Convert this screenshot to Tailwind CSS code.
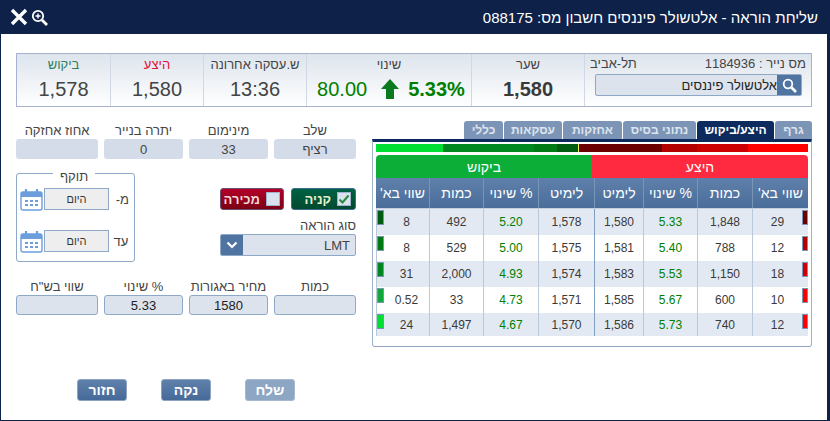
<!DOCTYPE html>
<html lang="he" dir="rtl">
<head>
<meta charset="utf-8">
<title>שליחת הוראה</title>
<script src="https://cdn.jsdelivr.net/npm/@tailwindcss/browser@4"></script>
</head>
<body class="m-0 bg-white">
<div class="w-[830px] h-[421px] overflow-hidden flex flex-col bg-white border-l border-b border-r-[3px] border-[#0d2149] font-['Liberation_Sans',Arial,sans-serif] text-[#444] text-[13px] leading-none">
  <!-- title bar -->
  <header class="h-[34px] shrink-0 bg-[#0d2149] text-white flex items-center justify-between pr-[9px] pl-[9px]">
    <h1 class="text-[15px] font-normal">שליחת הוראה - אלטשולר פיננסים חשבון מס: 088175</h1>
    <div class="flex flex-row-reverse items-center gap-[3px]">
      <svg width="18" height="18" viewBox="0 0 18 18" fill="none" stroke="white" stroke-width="3.4"><path d="M2 2 16 16M16 2 2 16"/></svg>
      <svg width="17" height="17" viewBox="0 0 17 17" fill="none" stroke="white"><circle cx="7" cy="7" r="5.2" stroke-width="1.8"/><path d="M11 11 16 16" stroke-width="2.8"/><path d="M4.5 7h5M7 4.5v5" stroke-width="1.4"/></svg>
    </div>
  </header>

  <div class="flex-1 flex flex-col pt-[19px] pr-[15px] pl-[15px]">
    <!-- quote strip -->
    <section class="h-[54px] w-[796px] shrink-0 flex border border-[#a6b2cf] bg-linear-to-b from-[#dde4ec] to-white">
      <div class="w-[227px] shrink-0 border-l border-[#cfd8e4] px-[5px] pt-px flex flex-col">
        <div class="flex justify-between text-[13px] h-[16px] items-center"><span>מס נייר : 1184936</span><span>תל-אביב</span></div>
        <div class="mt-[3px] mr-[4px] h-[22px] w-[207px] flex rounded-[2px] border border-[#8ea8c8] bg-[#dce3ed] overflow-hidden">
          <span class="w-[24px] shrink-0 bg-[#4f74a2] flex items-center justify-center">
            <svg width="15" height="15" viewBox="0 0 15 15" fill="none" stroke="white"><circle cx="6" cy="6" r="4.3" stroke-width="1.8"/><path d="M9.5 9.5 14 14" stroke-width="2.6"/></svg>
          </span>
          <span class="text-[13px] text-[#222] self-center">אלטשולר פיננסים</span>
        </div>
      </div>
      <div class="w-[113px] shrink-0 border-l border-[#cfd8e4] flex flex-col items-center pt-[4px]">
        <span>שער</span><strong class="text-[20px] mt-[8px] text-[#3a3a3a]">1,580</strong>
      </div>
      <div class="w-[165px] shrink-0 border-l border-[#cfd8e4] flex flex-col items-center pt-[4px]">
        <span>שינוי</span>
        <div class="flex items-center justify-center mt-[8px] h-[20px] gap-[9px] pl-[4px]">
          <strong class="text-[20px] text-[#008000]">5.33%</strong>
          <svg width="18" height="20" viewBox="0 0 18 20" fill="#0a7a1e"><path d="M9 0 18 10H13V20H5V10H0Z"/></svg>
          <span class="text-[20px] text-[#008000] mr-[5px]">80.00</span>
        </div>
      </div>
      <div class="w-[103px] shrink-0 border-l border-[#cfd8e4] flex flex-col items-center pt-[4px]">
        <span>ש.עסקה אחרונה</span><span class="text-[20px] mt-[8px] text-[#444]">13:36</span>
      </div>
      <div class="w-[93px] shrink-0 border-l border-[#cfd8e4] flex flex-col items-center pt-[4px]">
        <span class="text-[#e0103a]">היצע</span><span class="text-[20px] mt-[8px] text-[#444]">1,580</span>
      </div>
      <div class="flex-1 flex flex-col items-center pt-[4px]">
        <span class="text-[#2f8060]">ביקוש</span><span class="text-[20px] mt-[8px] text-[#444]">1,578</span>
      </div>
    </section>

    <div class="flex gap-[16px] mt-[14px]">
      <!-- market depth -->
      <section class="w-[440px] shrink-0">
        <nav class="flex gap-px h-[18px] text-[12px] font-bold text-[#dde4ee]">
          <span class="w-[37px] bg-[#7c95b6] rounded-t-[3px] flex items-center justify-center">גרף</span>
          <span class="w-[77px] bg-[#0c2a5e] text-white rounded-t-[3px] flex items-center justify-center">היצע/ביקוש</span>
          <span class="w-[73px] bg-[#7c95b6] rounded-t-[3px] flex items-center justify-center">נתוני בסיס</span>
          <span class="w-[59px] bg-[#7c95b6] rounded-t-[3px] flex items-center justify-center">אחזקות</span>
          <span class="w-[58px] bg-[#7c95b6] rounded-t-[3px] flex items-center justify-center">עסקאות</span>
          <span class="w-[39px] bg-[#7c95b6] rounded-t-[3px] flex items-center justify-center">כללי</span>
        </nav>
        <div class="h-[208px] border-t-[3px] border-[#0c2a5e] border-x border-b border-x-[#9db0c9] border-b-[#8ea3c0] rounded-b-[3px] pt-[2px] px-[3px]">
          <!-- depth bar -->
          <div class="flex h-[8px] w-[432px]">
            <i class="w-[60px] bg-[#ff0000]"></i><i class="w-[51px] bg-[#cc0000]"></i><i class="w-[35px] bg-[#b30000]"></i><i class="w-[84px] bg-[#6b0000]"></i><i class="w-px bg-[#f5ee50]"></i><i class="w-[21px] bg-[#005c10]"></i><i class="w-[23px] bg-[#007a15]"></i><i class="w-[91px] bg-[#008820]"></i><i class="w-[67px] bg-[#00dd33]"></i>
          </div>
          <!-- side headers -->
          <div class="flex h-[23px] w-[432px] mt-[3px] text-white text-[14px]">
            <div class="w-[216px] bg-[#ff2a40] rounded-tr-[4px] flex items-center justify-center">היצע</div>
            <div class="w-[216px] bg-[#0dae38] rounded-tl-[4px] flex items-center justify-center">ביקוש</div>
          </div>
          <!-- table -->
          <div class="w-[432px] text-center text-[12px] text-[#3a3a3a]">
            <div class="grid grid-cols-[56px_55px_54px_49px_56px_55px_54px_53px] h-[31px] bg-linear-to-b from-[#5f80aa] to-[#4a6d9b] text-white text-[14px] items-stretch border-b border-[#c4d0de]">
              <span class="flex items-center justify-center border-l border-[#7894b6]">שווי בא'</span>
              <span class="flex items-center justify-center border-l border-[#7894b6]">כמות</span>
              <span class="flex items-center justify-center border-l border-[#7894b6]">% שינוי</span>
              <span class="flex items-center justify-center border-l border-[#7894b6]">לימיט</span>
              <span class="flex items-center justify-center border-l border-[#7894b6]">לימיט</span>
              <span class="flex items-center justify-center border-l border-[#7894b6]">% שינוי</span>
              <span class="flex items-center justify-center border-l border-[#7894b6]">כמות</span>
              <span class="flex items-center justify-center">שווי בא'</span>
            </div>

            <div class="grid grid-cols-[56px_55px_54px_49px_56px_55px_54px_53px] h-[26px] bg-[#e3e9f3]">
              <div class="flex flex-row-reverse border-l border-[#b9c9d9]"><span class="flex-1 self-center">29</span><i class="w-[6px] h-[15px] mt-px bg-[#6b0000] border border-[#7b93b5]"></i></div>
              <span class="flex items-center justify-center border-l border-[#b9c9d9]">1,848</span>
              <span class="flex items-center justify-center border-l border-[#b9c9d9] text-[#008000]">5.33</span>
              <span class="flex items-center justify-center border-l border-[#7f9fc0]">1,580</span>
              <span class="flex items-center justify-center border-l border-[#b9c9d9]">1,578</span>
              <span class="flex items-center justify-center border-l border-[#b9c9d9] text-[#008000]">5.20</span>
              <span class="flex items-center justify-center border-l border-[#b9c9d9]">492</span>
              <div class="flex flex-row-reverse border-l border-[#b9c9d9]"><i class="w-[7px] h-[15px] mt-px bg-[#005c10] border border-[#7b93b5]"></i><span class="flex-1 self-center">8</span></div>
            </div>

            <div class="grid grid-cols-[56px_55px_54px_49px_56px_55px_54px_53px] h-[26px] bg-white">
              <div class="flex flex-row-reverse border-l border-[#b9c9d9]"><span class="flex-1 self-center">12</span><i class="w-[6px] h-[15px] mt-px bg-[#b30000] border border-[#7b93b5]"></i></div>
              <span class="flex items-center justify-center border-l border-[#b9c9d9]">788</span>
              <span class="flex items-center justify-center border-l border-[#b9c9d9] text-[#008000]">5.40</span>
              <span class="flex items-center justify-center border-l border-[#7f9fc0]">1,581</span>
              <span class="flex items-center justify-center border-l border-[#b9c9d9]">1,575</span>
              <span class="flex items-center justify-center border-l border-[#b9c9d9] text-[#008000]">5.00</span>
              <span class="flex items-center justify-center border-l border-[#b9c9d9]">529</span>
              <div class="flex flex-row-reverse border-l border-[#b9c9d9]"><i class="w-[7px] h-[15px] mt-px bg-[#007a15] border border-[#7b93b5]"></i><span class="flex-1 self-center">8</span></div>
            </div>

            <div class="grid grid-cols-[56px_55px_54px_49px_56px_55px_54px_53px] h-[26px] bg-[#e3e9f3]">
              <div class="flex flex-row-reverse border-l border-[#b9c9d9]"><span class="flex-1 self-center">18</span><i class="w-[6px] h-[15px] mt-px bg-[#cc0000] border border-[#7b93b5]"></i></div>
              <span class="flex items-center justify-center border-l border-[#b9c9d9]">1,150</span>
              <span class="flex items-center justify-center border-l border-[#b9c9d9] text-[#008000]">5.53</span>
              <span class="flex items-center justify-center border-l border-[#7f9fc0]">1,583</span>
              <span class="flex items-center justify-center border-l border-[#b9c9d9]">1,574</span>
              <span class="flex items-center justify-center border-l border-[#b9c9d9] text-[#008000]">4.93</span>
              <span class="flex items-center justify-center border-l border-[#b9c9d9]">2,000</span>
              <div class="flex flex-row-reverse border-l border-[#b9c9d9]"><i class="w-[7px] h-[15px] mt-px bg-[#008820] border border-[#7b93b5]"></i><span class="flex-1 self-center">31</span></div>
            </div>

            <div class="grid grid-cols-[56px_55px_54px_49px_56px_55px_54px_53px] h-[26px] bg-white">
              <div class="flex flex-row-reverse border-l border-[#b9c9d9]"><span class="flex-1 self-center">10</span><i class="w-[6px] h-[15px] mt-px bg-[#ff0000] border border-[#7b93b5]"></i></div>
              <span class="flex items-center justify-center border-l border-[#b9c9d9]">600</span>
              <span class="flex items-center justify-center border-l border-[#b9c9d9] text-[#008000]">5.67</span>
              <span class="flex items-center justify-center border-l border-[#7f9fc0]">1,585</span>
              <span class="flex items-center justify-center border-l border-[#b9c9d9]">1,571</span>
              <span class="flex items-center justify-center border-l border-[#b9c9d9] text-[#008000]">4.73</span>
              <span class="flex items-center justify-center border-l border-[#b9c9d9]">33</span>
              <div class="flex flex-row-reverse border-l border-[#b9c9d9]"><i class="w-[7px] h-[15px] mt-px bg-[#10a838] border border-[#7b93b5]"></i><span class="flex-1 self-center">0.52</span></div>
            </div>

            <div class="grid grid-cols-[56px_55px_54px_49px_56px_55px_54px_53px] h-[23px] bg-[#e3e9f3]">
              <div class="flex flex-row-reverse border-l border-[#b9c9d9]"><span class="flex-1 self-center">12</span><i class="w-[6px] h-[15px] mt-px bg-[#ff0000] border border-[#7b93b5]"></i></div>
              <span class="flex items-center justify-center border-l border-[#b9c9d9]">740</span>
              <span class="flex items-center justify-center border-l border-[#b9c9d9] text-[#008000]">5.73</span>
              <span class="flex items-center justify-center border-l border-[#7f9fc0]">1,586</span>
              <span class="flex items-center justify-center border-l border-[#b9c9d9]">1,570</span>
              <span class="flex items-center justify-center border-l border-[#b9c9d9] text-[#008000]">4.67</span>
              <span class="flex items-center justify-center border-l border-[#b9c9d9]">1,497</span>
              <div class="flex flex-row-reverse border-l border-[#b9c9d9]"><i class="w-[7px] h-[15px] mt-px bg-[#00dd33] border border-[#7b93b5]"></i><span class="flex-1 self-center">24</span></div>
            </div>
          </div>
        </div>
      </section>

      <!-- order form -->
      <section class="w-[340px] shrink-0 flex flex-col">
        <div class="grid grid-cols-[82px_79px_79px_82px] gap-x-[6px] text-center">
          <label class="flex flex-col"><span class="h-[18px] flex items-center justify-center">שלב</span><span class="h-[20px] bg-[#d3dce8] rounded-[3px] flex items-center justify-center">רציף</span></label>
          <label class="flex flex-col"><span class="h-[18px] flex items-center justify-center">מינימום</span><span class="h-[20px] bg-[#d3dce8] rounded-[3px] flex items-center justify-center">33</span></label>
          <label class="flex flex-col"><span class="h-[18px] flex items-center justify-center">יתרה בנייר</span><span class="h-[20px] bg-[#d3dce8] rounded-[3px] flex items-center justify-center">0</span></label>
          <label class="flex flex-col"><span class="h-[18px] flex items-center justify-center">אחוז אחזקה</span><span class="h-[20px] bg-[#d3dce8] rounded-[3px]"></span></label>
        </div>

        <div class="flex justify-between mt-[14px]">
          <div class="w-[136px] pt-[15px]">
            <div class="flex gap-[7px] h-[22px] text-[13px] font-bold">
              <span class="w-[65px] rounded-[3px] bg-linear-to-b from-[#006144] to-[#004a30] border border-[#3c6d8a] text-[#e8f0c8] flex items-center pr-[4px] gap-[6px]">
                <svg width="14" height="14" viewBox="0 0 14 14"><rect x=".5" y=".5" width="13" height="13" fill="#d9e3ee" stroke="#9fb3cb"/><path d="M2.5 7.5 5.5 10.5 11.5 3.5" fill="none" stroke="#2a8a3a" stroke-width="2"/></svg>
                <span>קניה</span>
              </span>
              <span class="w-[64px] rounded-[3px] bg-linear-to-b from-[#b3002a] to-[#7d0014] border border-[#6a5070] text-[#f3d8d8] flex items-center pr-[3px] gap-[6px]">
                <i class="w-[14px] h-[14px] bg-[#d9e3ee] border border-[#9fb3cb]"></i>
                <span>מכירה</span>
              </span>
            </div>
            <div class="mt-[6px] h-[18px] flex items-center">סוג הוראה</div>
            <div class="h-[22px] flex rounded-[2px] border border-[#8ea8c8] bg-[#dde3ed] overflow-hidden">
              <span class="flex-1 flex items-center pr-[5px] text-[13px]">LMT</span>
              <span class="w-[22px] bg-[#4f74a2] flex items-center justify-center">
                <svg width="12" height="8" viewBox="0 0 12 8" fill="none" stroke="white" stroke-width="2.2"><path d="M1.5 1.5 6 6 10.5 1.5"/></svg>
              </span>
            </div>
          </div>

          <fieldset class="relative w-[114px] h-[89px] border border-[#8ea8c8] rounded-[3px] pt-[14px] pr-[5px] pl-[3px]">
            <span class="absolute -top-[4px] left-[36px] bg-white px-[7px] text-[13px]">תוקף</span>
            <div class="flex items-center h-[22px]">
              <span class="w-[16px] text-right">מ-</span>
              <span class="w-[65px] h-[22px] mr-[4px] bg-[#eeeeee] border border-[#8ea8c8] flex items-center justify-center text-[11px] text-[#333]">היום</span>
              <svg class="mr-[1px]" width="23" height="23" viewBox="0 0 23 23"><rect x="1" y="4" width="21" height="18" rx="2" fill="#fff" stroke="#6b9edb" stroke-width="1.4"/><path d="M1 4h21v5H1z" fill="#6b9edb"/><path d="M6 1v5M17 1v5" stroke="#6b9edb" stroke-width="2.2"/><path d="M5 12h3v2H5zM10 12h3v2h-3zM15 12h3v2h-3zM5 16h3v2H5zM10 16h3v2h-3zM15 16h3v2h-3z" fill="#6b9edb"/></svg>
            </div>
            <div class="flex items-center h-[22px] mt-[20px]">
              <span class="w-[16px] text-center">עד</span>
              <span class="w-[65px] h-[22px] mr-[4px] bg-[#eeeeee] border border-[#8ea8c8] flex items-center justify-center text-[11px] text-[#333]">היום</span>
              <svg class="mr-[1px]" width="23" height="23" viewBox="0 0 23 23"><rect x="1" y="4" width="21" height="18" rx="2" fill="#fff" stroke="#6b9edb" stroke-width="1.4"/><path d="M1 4h21v5H1z" fill="#6b9edb"/><path d="M6 1v5M17 1v5" stroke="#6b9edb" stroke-width="2.2"/><path d="M5 12h3v2H5zM10 12h3v2h-3zM15 12h3v2h-3zM5 16h3v2H5zM10 16h3v2h-3zM15 16h3v2h-3z" fill="#6b9edb"/></svg>
            </div>
          </fieldset>
        </div>

        <div class="grid grid-cols-[82px_79px_79px_82px] gap-x-[6px] text-center mt-[15px]">
          <label class="flex flex-col"><span class="h-[18px] flex items-center justify-center">כמות</span><span class="h-[20px] bg-[#dde3ed] border border-[#8ea8c8] rounded-[3px]"></span></label>
          <label class="flex flex-col"><span class="h-[18px] flex items-center justify-center">מחיר באגורות</span><span class="h-[20px] bg-[#dde3ed] border border-[#8ea8c8] rounded-[3px] flex items-center justify-center text-[#222]">1580</span></label>
          <label class="flex flex-col"><span class="h-[18px] flex items-center justify-center">% שינוי</span><span class="h-[20px] bg-[#dde3ed] border border-[#8ea8c8] rounded-[3px] flex items-center justify-center text-[#222]">5.33</span></label>
          <label class="flex flex-col"><span class="h-[18px] flex items-center justify-center">שווי בש"ח</span><span class="h-[20px] bg-[#dde3ed] border border-[#8ea8c8] rounded-[3px]"></span></label>
        </div>

        <div class="flex justify-center gap-[34px] mt-[64px] text-[14px] font-bold text-white">
          <button class="w-[50px] h-[22px] rounded-[3px] bg-[#8da6c4] border border-[#a8b8cc]">שלח</button>
          <button class="w-[50px] h-[22px] rounded-[3px] bg-linear-to-b from-[#5f80aa] to-[#466a99] border border-[#8ea3c0]">נקה</button>
          <button class="w-[50px] h-[22px] rounded-[3px] bg-linear-to-b from-[#5f80aa] to-[#466a99] border border-[#8ea3c0]">חזור</button>
        </div>
      </section>
    </div>
  </div>
</div>
</body>
</html>
